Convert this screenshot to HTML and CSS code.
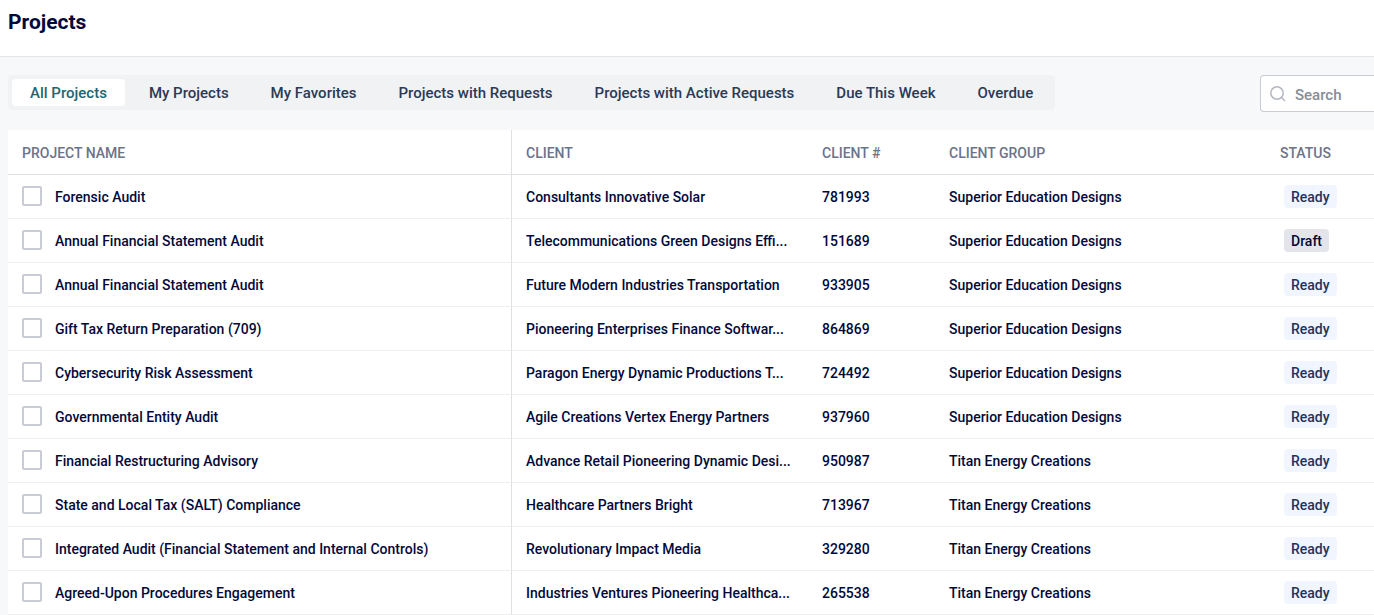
FILE: index.html
```html
<!DOCTYPE html>
<html lang="en">
<head>
<meta charset="utf-8">
<meta name="viewport" content="width=device-width, initial-scale=1">
<title>Projects</title>
<link rel="stylesheet" href="styles.css">
</head>
<body>
<header class="page-header">
  <h1 class="page-title">Projects</h1>
</header>
<main class="content">
  <div class="toolbar">
    <nav class="tabs" aria-label="Project filters">
      <button type="button" class="tab tab-active">All Projects</button>
      <button type="button" class="tab">My Projects</button>
      <button type="button" class="tab">My Favorites</button>
      <button type="button" class="tab">Projects with Requests</button>
      <button type="button" class="tab">Projects with Active Requests</button>
      <button type="button" class="tab">Due This Week</button>
      <button type="button" class="tab">Overdue</button>
    </nav>
    <label class="search">
      <svg class="search-icon" viewBox="0 0 16 16" aria-hidden="true"><circle cx="7" cy="7" r="6.2"/><path d="M11.5 11.5L15 15"/></svg>
      <input class="search-input" type="text" placeholder="Search" aria-label="Search">
    </label>
  </div>
  <table class="projects">
    <colgroup><col class="col-name"><col class="col-client"><col class="col-number"><col class="col-group"><col></colgroup>
    <thead>
      <tr><th>PROJECT NAME</th><th>CLIENT</th><th>CLIENT #</th><th>CLIENT GROUP</th><th>STATUS</th></tr>
    </thead>
    <tbody>
      <tr><td><label class="name"><input type="checkbox" class="check">Forensic Audit</label></td><td>Consultants Innovative Solar</td><td>781993</td><td>Superior Education Designs</td><td><span class="badge">Ready</span></td></tr>
      <tr><td><label class="name"><input type="checkbox" class="check">Annual Financial Statement Audit</label></td><td>Telecommunications Green Designs Effi...</td><td>151689</td><td>Superior Education Designs</td><td><span class="badge badge-draft">Draft</span></td></tr>
      <tr><td><label class="name"><input type="checkbox" class="check">Annual Financial Statement Audit</label></td><td>Future Modern Industries Transportation</td><td>933905</td><td>Superior Education Designs</td><td><span class="badge">Ready</span></td></tr>
      <tr><td><label class="name"><input type="checkbox" class="check">Gift Tax Return Preparation (709)</label></td><td>Pioneering Enterprises Finance Softwar...</td><td>864869</td><td>Superior Education Designs</td><td><span class="badge">Ready</span></td></tr>
      <tr><td><label class="name"><input type="checkbox" class="check">Cybersecurity Risk Assessment</label></td><td>Paragon Energy Dynamic Productions T...</td><td>724492</td><td>Superior Education Designs</td><td><span class="badge">Ready</span></td></tr>
      <tr><td><label class="name"><input type="checkbox" class="check">Governmental Entity Audit</label></td><td>Agile Creations Vertex Energy Partners</td><td>937960</td><td>Superior Education Designs</td><td><span class="badge">Ready</span></td></tr>
      <tr><td><label class="name"><input type="checkbox" class="check">Financial Restructuring Advisory</label></td><td>Advance Retail Pioneering Dynamic Desi...</td><td>950987</td><td>Titan Energy Creations</td><td><span class="badge">Ready</span></td></tr>
      <tr><td><label class="name"><input type="checkbox" class="check">State and Local Tax (SALT) Compliance</label></td><td>Healthcare Partners Bright</td><td>713967</td><td>Titan Energy Creations</td><td><span class="badge">Ready</span></td></tr>
      <tr><td><label class="name"><input type="checkbox" class="check">Integrated Audit (Financial Statement and Internal Controls)</label></td><td>Revolutionary Impact Media</td><td>329280</td><td>Titan Energy Creations</td><td><span class="badge">Ready</span></td></tr>
      <tr><td><label class="name"><input type="checkbox" class="check">Agreed-Upon Procedures Engagement</label></td><td>Industries Ventures Pioneering Healthca...</td><td>265538</td><td>Titan Energy Creations</td><td><span class="badge">Ready</span></td></tr>
    </tbody>
  </table>
</main>
</body>
</html>
```
FILE: styles.css
```css
* {
  box-sizing: border-box;
}

body {
  margin: 0;
  background: #f7f8fa;
  color: #02093a;
  font-family: Roboto, "Liberation Sans", sans-serif;
  font-size: 14px;
  font-weight: 500;
  line-height: 20px;
}

.page-header {
  padding: 8px 8px 20px;
  background: #fff;
  border-bottom: 1px solid #e4e5ea;
}

.page-title {
  margin: 0;
  font-size: 21px;
  font-weight: 700;
  line-height: 28px;
}

.content {
  padding: 18px 0 0 8px;
}

.toolbar {
  display: flex;
  align-items: flex-start;
  justify-content: space-between;
  margin-bottom: 18px;
}

.tabs {
  display: flex;
  gap: 6px;
  padding: 4px;
  border-radius: 4px;
  background: #f1f2f4;
}

.tab {
  padding: 2px 18px 0;
  border: 0;
  border-radius: 4px;
  background: none;
  color: #2b3a55;
  font: inherit;
  font-size: 15px;
  line-height: 25px;
  white-space: nowrap;
}

.tab-active {
  background: #fff;
  color: #1f6572;
}

.search {
  display: flex;
  align-items: center;
  gap: 9px;
  width: 114px;
  height: 37px;
  padding-left: 9px;
  border: 1px solid #c9ccd5;
  border-right: 0;
  border-radius: 4px 0 0 4px;
  background: #fff;
}

.search-icon {
  flex: none;
  width: 16px;
  height: 16px;
  fill: none;
  stroke: #b4b6c3;
  stroke-width: 1.5;
}

.search-input {
  width: 100%;
  min-width: 0;
  padding: 2px 0 0;
  border: 0;
  outline: 0;
  background: none;
  color: inherit;
  font: inherit;
  font-size: 15px;
}

.search-input::placeholder {
  color: #858d99;
}

.projects {
  width: 100%;
  table-layout: fixed;
  border-spacing: 0;
  background: #fff;
}

.col-name { width: 504px; }
.col-client { width: 296px; }
.col-number { width: 127px; }
.col-group { width: 331px; }

.projects th,
.projects td {
  height: 44px;
  padding: 0 0 0 14px;
  border-bottom: 1px solid #eeeff1;
  text-align: left;
  white-space: nowrap;
}

.projects th {
  height: 45px;
  padding-top: 2px;
  border-bottom-color: #dfe0e4;
  color: #6d7389;
  font-weight: 500;
}

.projects th:first-child,
.projects td:first-child {
  border-right: 1px solid #dfe0e4;
}

.name {
  display: flex;
  align-items: center;
  gap: 13px;
}

.check {
  flex: none;
  width: 20px;
  height: 20px;
  margin: 0 0 2px;
  appearance: none;
  border: 2px solid #caccd5;
  border-radius: 2px;
  background: #fff;
}

.check:checked {
  background: #1f6572;
}

.badge {
  display: inline-block;
  margin-left: 4px;
  padding: 2px 7px 0;
  border-radius: 4px;
  background: #f0f5ff;
  color: #1f335c;
  line-height: 21px;
  vertical-align: middle;
}

.badge-draft {
  background: #e4e5ea;
  color: #02093a;
}
```
